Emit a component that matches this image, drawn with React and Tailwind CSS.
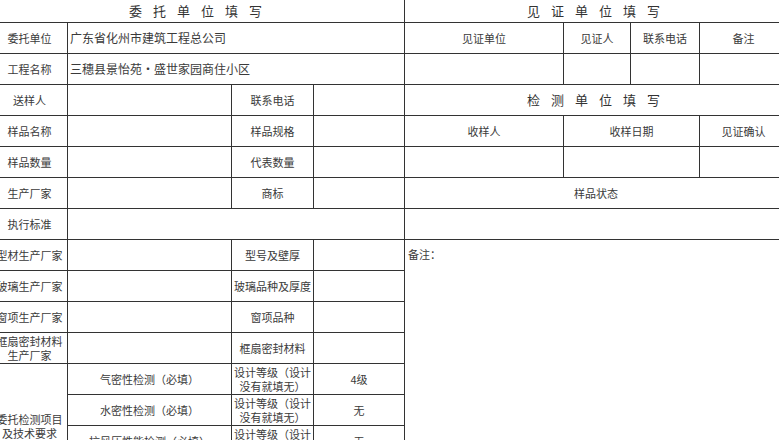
const font = { fontFamily: '"Noto Sans CJK SC", "Liberation Serif", serif' };

const Cell = ({ children, className = "", left }) => (
  <div
    className={
      "bg-white flex items-center text-[11px] leading-[14px] text-[#3a3a3a] " +
      (left ? "justify-start pl-[2px] " : "justify-center text-center px-[1px] ") +
      className
    }
  >
    {children}
  </div>
);

const Title = ({ children, className = "" }) => (
  <div
    className={
      "bg-white flex items-center justify-center pl-[6px] text-[13px] tracking-[11px] text-[#333] " +
      className
    }
  >
    {children}
  </div>
);

const pairRows = [
  ["送样人", "联系电话"],
  ["样品名称", "样品规格"],
  ["样品数量", "代表数量"],
  ["生产厂家", "商标"],
];

const materialRows = [
  ["型材生产厂家", "型号及壁厚"],
  ["玻璃生产厂家", "玻璃品种及厚度"],
  ["窗项生产厂家", "窗项品种"],
  ["框扇密封材料生产厂家", "框扇密封材料"],
];

const tests = [
  ["气密性检测（必填）", "4级"],
  ["水密性检测（必填）", "无"],
  ["抗风压性能检测（必填）", "无"],
  ["", ""],
];

export default function App() {
  return (
    <div className="w-[779px] h-[440px] overflow-hidden bg-white" style={font}>
      <div className="-ml-[8px] w-max grid grid-cols-[75px_163px_81px_90px_158px_66px_68px_87px] grid-rows-[22px_repeat(15,30px)] gap-px bg-[#333]">
        {/* row 1 */}
        <Title className="col-span-4">委托单位填写</Title>
        <Title className="col-span-4">见证单位填写</Title>

        {/* row 2 */}
        <Cell>委托单位</Cell>
        <Cell left className="col-span-3 text-[12px]">广东省化州市建筑工程总公司</Cell>
        <Cell>见证单位</Cell>
        <Cell>见证人</Cell>
        <Cell>联系电话</Cell>
        <Cell>备注</Cell>

        {/* row 3 */}
        <Cell>工程名称</Cell>
        <Cell left className="col-span-3 text-[12px]">三穗县景怡苑•盛世家园商住小区</Cell>
        <Cell />
        <Cell />
        <Cell />
        <Cell />

        {/* rows 4-7 */}
        {pairRows.map(([a, b], i) => (
          <div key={a} className="contents">
            <Cell>{a}</Cell>
            <Cell />
            <Cell>{b}</Cell>
            <Cell />
            {i === 0 && <Title className="col-span-4">检测单位填写</Title>}
            {i === 1 && (
              <>
                <Cell>收样人</Cell>
                <Cell className="col-span-2">收样日期</Cell>
                <Cell>见证确认</Cell>
              </>
            )}
            {i === 2 && (
              <>
                <Cell />
                <Cell className="col-span-2" />
                <Cell />
              </>
            )}
            {i === 3 && <Cell className="col-span-4">样品状态</Cell>}
          </div>
        ))}

        {/* row 8 */}
        <Cell>执行标准</Cell>
        <Cell className="col-span-3" />
        <Cell className="col-span-4" />

        {/* rows 9-12 */}
        {materialRows.map(([a, b], i) => (
          <div key={a} className="contents">
            <Cell>{a}</Cell>
            <Cell />
            <Cell className="whitespace-nowrap">{b}</Cell>
            <Cell />
            {i === 0 && (
              <div className="col-span-4 row-span-8 bg-white pl-[3px] pt-[6px] text-[11px] text-[#3a3a3a]">
                备注：
              </div>
            )}
          </div>
        ))}

        {/* rows 13-16 */}
        <Cell className="row-span-4">委托检测项目及技术要求</Cell>
        {tests.map(([name, grade], i) => (
          <div key={i} className="contents">
            <Cell>{name}</Cell>
            <Cell>
              {name ? (
                <span>
                  设计等级（设计
                  <br />
                  没有就填无）
                </span>
              ) : null}
            </Cell>
            <Cell>{grade}</Cell>
          </div>
        ))}
      </div>
    </div>
  );
}
